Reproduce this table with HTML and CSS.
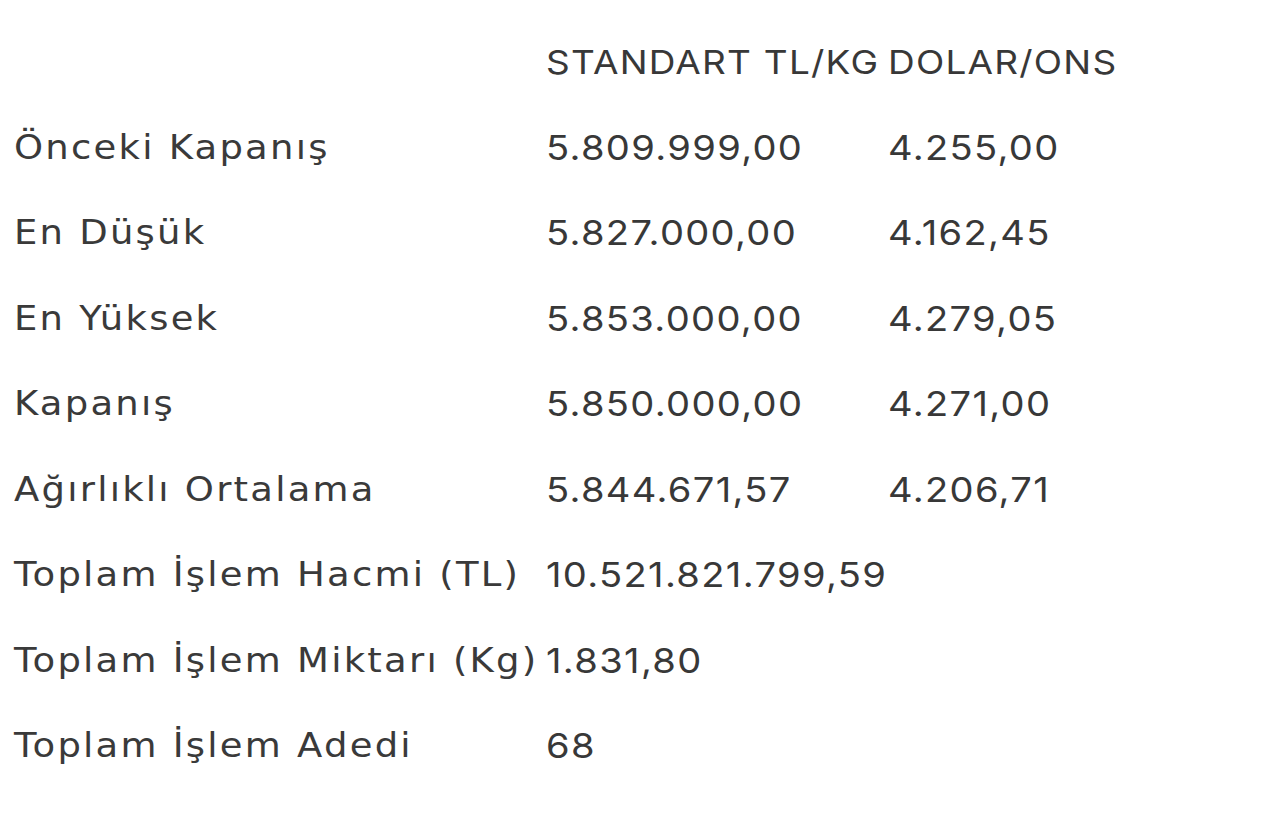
FILE: index.html
```html
<!DOCTYPE html>
<html lang="tr">
<head>
<meta charset="utf-8">
<link rel="stylesheet" href="styles.css">
</head>
<body>
<div class="table">
  <div class="row head"><div class="label"></div><div class="val">STANDART TL/KG</div><div class="val">DOLAR/ONS</div></div>
  <div class="row"><div class="label">Önceki Kapanış</div><div class="val">5.809.999,00</div><div class="val">4.255,00</div></div>
  <div class="row"><div class="label">En Düşük</div><div class="val">5.827.000,00</div><div class="val">4.162,45</div></div>
  <div class="row"><div class="label">En Yüksek</div><div class="val">5.853.000,00</div><div class="val">4.279,05</div></div>
  <div class="row"><div class="label">Kapanış</div><div class="val">5.850.000,00</div><div class="val">4.271,00</div></div>
  <div class="row"><div class="label">Ağırlıklı Ortalama</div><div class="val">5.844.671,57</div><div class="val">4.206,71</div></div>
  <div class="row"><div class="label">Toplam İşlem Hacmi (TL)</div><div class="val">10.521.821.799,59</div><div class="val"></div></div>
  <div class="row"><div class="label">Toplam İşlem Miktarı (Kg)</div><div class="val">1.831,80</div><div class="val"></div></div>
  <div class="row"><div class="label">Toplam İşlem Adedi</div><div class="val">68</div><div class="val"></div></div>
</div>
</body>
</html>
```

FILE: styles.css
```css
html, body { margin: 0; padding: 0; background: #fff; }
body { color: #383838; }
.table { display: flex; flex-direction: column; padding: 19px 0 0 14px; }
.row { display: grid; grid-template-columns: 532px 342px auto; height: 85.5px; align-items: center; white-space: nowrap; }
.label, .val { transform: scaleX(1.12); transform-origin: left center; }
.label { font-family: "DejaVu Sans", sans-serif; font-size: 33px; letter-spacing: 2px; color: #3a3a3a; }
.val { font-family: "Inter", sans-serif; font-size: 34px; letter-spacing: 1.2px; }
.head .val { font-size: 33px; letter-spacing: 1.1px; }
```
